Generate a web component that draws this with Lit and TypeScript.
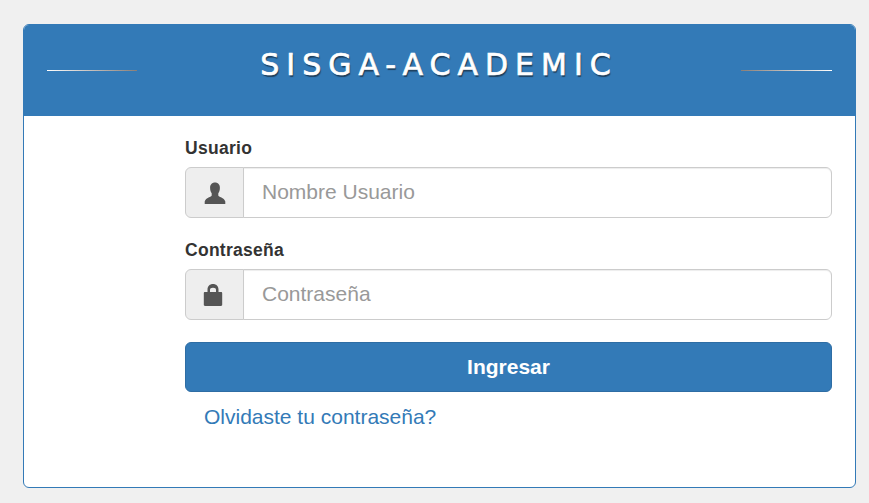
import { LitElement, html, css } from "lit";
import { customElement } from "lit/decorators.js";

@customElement("app-root")
export class AppRoot extends LitElement {
  static styles = css`
    :host {
      display: block;
      min-height: 100vh;
      box-sizing: border-box;
      padding: 24px 13px 0 23px;
      background: #f0f0f0;
      font-family: "Liberation Sans", Arial, sans-serif;
      color: #333;
    }
    * { box-sizing: border-box; }
    .panel {
      height: 464px;
      background: #fff;
      border: 1px solid #337ab7;
      border-radius: 6px;
      overflow: hidden;
    }
    .heading {
      height: 91px;
      background: #337ab7;
      display: flex;
      align-items: center;
      justify-content: space-between;
      padding: 0 23px;
    }
    .line {
      width: 90px;
      height: 1px;
      margin-top: -1px;
    }
    .line.left { background: linear-gradient(to right, #fff, #8a7f78); }
    .line.right { background: linear-gradient(to left, #fff, #8a7f78); width: 91px; }
    h1 {
      margin: 0;
      margin-top: -12px;
      font-family: "DejaVu Sans", Verdana, sans-serif;
      font-size: 30px;
      font-weight: 400;
      letter-spacing: 7px;
      color: #fff;
      -webkit-text-stroke: 0.7px #fff;
      text-shadow: 1px 2px 1px #1f3f5c;
      line-height: 1;
    }
    .body {
      padding: 21px 23px 0 161px;
      display: flex;
      flex-direction: column;
    }
    label {
      font-size: 17.5px;
      font-weight: 700;
      letter-spacing: 0.28px;
      line-height: 22px;
      margin-bottom: 8px;
      color: #333;
    }
    .group {
      display: flex;
      height: 51px;
      margin-bottom: 21px;
    }
    .group + label + .group { margin-bottom: 20px; }
    .addon {
      width: 59px;
      flex: none;
      display: flex;
      align-items: center;
      justify-content: center;
      background: #eee;
      border: 1px solid #ccc;
      border-radius: 6px 0 0 6px;
    }
    .addon svg { display: block; fill: #555; }
    .addon svg.lock { margin-right: 3px; }
    input {
      flex: 1;
      min-width: 0;
      margin-left: -1px;
      padding: 0 18px 2px;
      border: 1px solid #ccc;
      border-radius: 0 6px 6px 0;
      font: 21px "Liberation Sans", Arial, sans-serif;
      color: #555;
      background: #fff;
      box-shadow: inset 0 1px 1px rgba(0, 0, 0, 0.075);
      outline: none;
    }
    input::placeholder { color: #999; opacity: 1; }
    button {
      height: 50px;
      margin-top: 2px;
      border: 1px solid #2e6da4;
      border-radius: 6px;
      background: #337ab7;
      color: #fff;
      font: 700 21px "Liberation Sans", Arial, sans-serif;
    }
    a {
      align-self: flex-start;
      margin: 11px 0 0 19px;
      font-size: 21px;
      line-height: 28px;
      color: #337ab7;
      text-decoration: none;
    }
  `;

  render() {
    return html`
      <div class="panel">
        <div class="heading">
          <div class="line left"></div>
          <h1>SISGA-ACADEMIC</h1>
          <div class="line right"></div>
        </div>
        <form class="body">
          <label for="u">Usuario</label>
          <div class="group">
            <span class="addon">
              <svg width="22" height="22" viewBox="0 0 22 22">
                <path d="M11 0.500c3 0 4.900 2.200 4.900 5.200 0 2.300-.7 4.300-1.600 5.500v2.200c0 1.400 6 2 7 6.100v2.500H.700v-2.500c1-4.100 7-4.700 7-6.100v-2.200c-.9-1.200-1.600-3.200-1.600-5.500 0-3 1.900-5.200 4.900-5.200z"/>
              </svg>
            </span>
            <input id="u" placeholder="Nombre Usuario" />
          </div>
          <label for="p">Contraseña</label>
          <div class="group">
            <span class="addon">
              <svg class="lock" width="22" height="22" viewBox="0 0 22 22">
                <path fill-rule="evenodd" d="M5.500 8V5.500C5.500 2.200 7.800 0 11 0s5.500 2.200 5.500 5.500V8H19c.8 0 1.200.5 1.200 1.200v11.600c0 .7-.4 1.200-1.200 1.200H3c-.8 0-1.200-.5-1.200-1.200V9.200C1.800 8.500 2.200 8 3 8h2.500zm2.500 0h6V5.800c0-1.300-.9-2-3-2s-3 .7-3 2V8z"/>
              </svg>
            </span>
            <input id="p" type="password" placeholder="Contraseña" />
          </div>
          <button type="button">Ingresar</button>
          <a href="#">Olvidaste tu contraseña?</a>
        </form>
      </div>
    `;
  }
}
